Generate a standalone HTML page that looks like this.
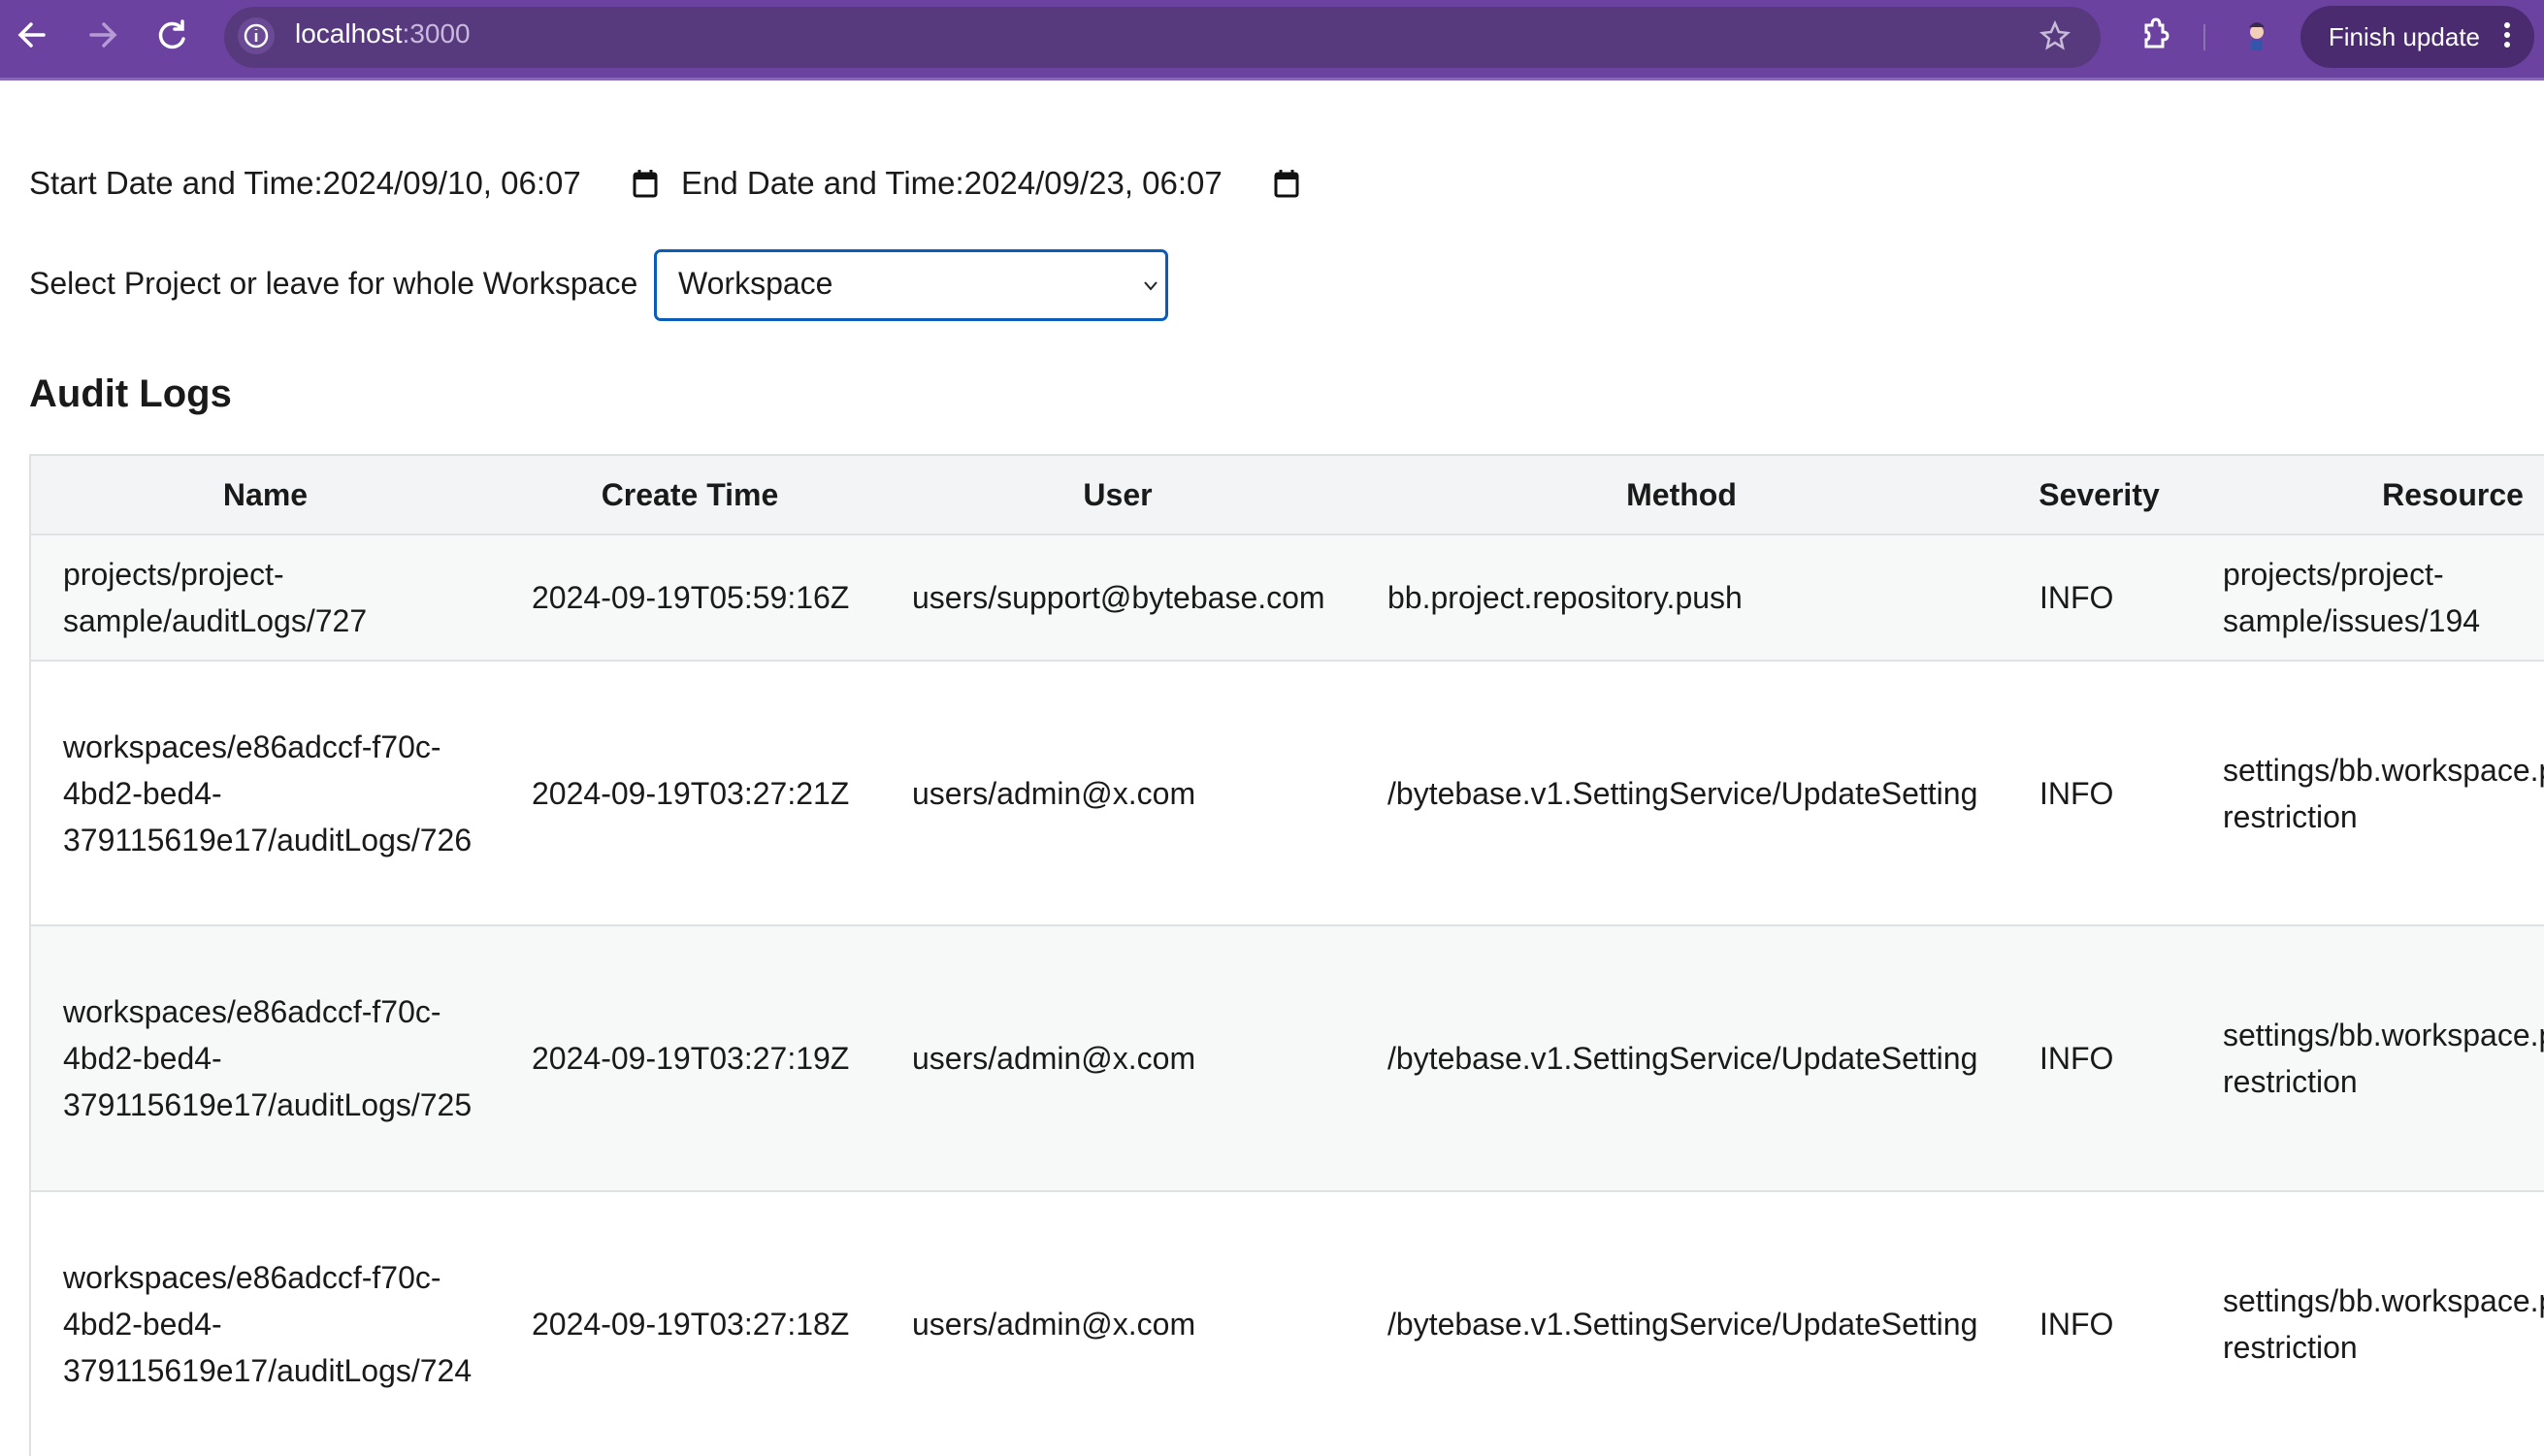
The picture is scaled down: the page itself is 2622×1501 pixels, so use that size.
<!DOCTYPE html>
<html><head><meta charset="utf-8"><style>
html,body{margin:0;padding:0;width:2622px;height:1442px;overflow:hidden;background:#fff;font-family:"Liberation Sans",Arial,sans-serif;color:#1a1a1a}
.bar{position:absolute;left:0;top:0;width:2622px;height:80px;background:#6c42a0;border-bottom:3px solid #8a68b8}
.pill{position:absolute;left:231px;top:7px;width:1934px;height:63px;border-radius:32px;background:#573a7e}
.url{position:absolute;left:304px;top:19px;font-size:28px;color:#fff}
.url span{color:#c9b9dc}
.fin{position:absolute;left:2371px;top:6px;width:241px;height:64px;border-radius:32px;background:#4a2b6f;color:#fff;font-size:26px;line-height:64px}
.lbl{position:absolute;font-size:33px;white-space:nowrap}
.sel{position:absolute;left:674px;top:257px;width:524px;height:68px;border:3px solid #0b5cb8;border-radius:7px;box-sizing:content-box}
h2{position:absolute;left:30px;top:384px;margin:0;font-size:40px;font-weight:bold}
table{position:absolute;left:30px;top:468px;border-collapse:collapse;table-layout:fixed;width:2767px;font-size:32px;line-height:48px}
th,td{padding:0 0 0 33px;vertical-align:middle;text-align:left;white-space:nowrap;border-top:2px solid #dfe2e4}
th{text-align:center;padding:0;font-weight:bold;height:80px;background:#f2f4f5}
table{border-left:2px solid #dfe2e4;border-top:2px solid #dfe2e4}
tr.g td{background:#f7f9f9}
</style></head><body>
<div class="bar">
<svg width="2622" height="80" style="position:absolute;left:0;top:0">
<g stroke="#fff" stroke-width="3.5" fill="none" stroke-linecap="round">
<path d="M45 36H22M32 25L21 36L32 47"/>
<path d="M94 36H117M107 25L118 36L107 47" stroke="#b59bd6"/>
<path d="M186 28A12 12 0 1 0 189 40M188 22V30H180"/>
</g>
<path d="M2272 25V52" stroke="#8c72b0" stroke-width="2"/>
<circle cx="2326" cy="33" r="7" fill="#f1cfb8"/>
<path d="M2318 28Q2326 18 2334 28" fill="#3b2a50"/>
<rect x="2320" y="41" width="12" height="11" fill="#3355aa"/>
</svg>
</div>
<div class="pill" style="z-index:1"></div>
<div class="url" style="z-index:2">localhost<span>:3000</span></div>
<div class="fin" style="z-index:1">&nbsp;&nbsp;&nbsp;&nbsp;Finish update</div>
<svg width="10" height="30" style="position:absolute;left:2579px;top:22px;z-index:2"><circle cx="5" cy="4" r="3" fill="#fff"/><circle cx="5" cy="14" r="3" fill="#fff"/><circle cx="5" cy="24" r="3" fill="#fff"/></svg>
<svg width="2622" height="80" style="position:absolute;left:0;top:0;z-index:2">
<circle cx="264" cy="37" r="19" fill="#6a4a95"/>
<circle cx="264" cy="37" r="11" stroke="#fff" stroke-width="2.5" fill="none"/>
<path d="M264 34V43M264 30V31" stroke="#fff" stroke-width="2.5"/>
<path d="M2118 24L2122 33L2131 34L2124 40L2126 49L2118 44L2110 49L2112 40L2105 34L2114 33Z" stroke="#c8bcd8" stroke-width="2.5" fill="none"/>
<path d="M2212 26H2218Q2218 20 2222 20Q2226 20 2226 26H2229V33Q2234 33 2234 37Q2234 41 2229 41V48H2212V41Q2215 41 2215 37Q2215 33 2212 33Z" stroke="#fff" stroke-width="3" fill="none"/>
</svg>

<div class="lbl" style="left:30px;top:170px">Start Date and Time:2024/09/10, 06:07</div>
<svg width="30" height="32" style="position:absolute;left:651px;top:174px"><rect x="3" y="5" width="22" height="23" rx="2" stroke="#111" stroke-width="3" fill="none"/><rect x="3" y="5" width="22" height="6" fill="#111"/><path d="M8 1V6M20 1V6" stroke="#111" stroke-width="3"/></svg>
<div class="lbl" style="left:702px;top:170px">End Date and Time:2024/09/23, 06:07</div>
<svg width="30" height="32" style="position:absolute;left:1312px;top:174px"><rect x="3" y="5" width="22" height="23" rx="2" stroke="#111" stroke-width="3" fill="none"/><rect x="3" y="5" width="22" height="6" fill="#111"/><path d="M8 1V6M20 1V6" stroke="#111" stroke-width="3"/></svg>

<div class="lbl" style="left:30px;top:274px;font-size:32px">Select Project or leave for whole Workspace</div>
<div class="sel"></div>
<div class="lbl" style="left:699px;top:274px;font-size:32px">Workspace</div>
<svg width="20" height="14" style="position:absolute;left:1177px;top:288px"><path d="M3 3L9 10L15 3" stroke="#222" stroke-width="2" fill="none"/></svg>

<h2>Audit Logs</h2>

<table>
<colgroup><col style="width:484px"><col style="width:392px"><col style="width:490px"><col style="width:672px"><col style="width:189px"><col style="width:540px"></colgroup>
<tr><th>Name</th><th>Create Time</th><th>User</th><th>Method</th><th>Severity</th><th>Resource</th></tr>
<tr class="g" style="height:130px"><td>projects/project-<br>sample/auditLogs/727</td><td>2024-09-19T05:59:16Z</td><td>users/support@bytebase.com</td><td>bb.project.repository.push</td><td>INFO</td><td>projects/project-<br>sample/issues/194</td></tr>
<tr style="height:273px"><td>workspaces/e86adccf-f70c-<br>4bd2-bed4-<br>379115619e17/auditLogs/726</td><td>2024-09-19T03:27:21Z</td><td>users/admin@x.com</td><td>/bytebase.v1.SettingService/UpdateSetting</td><td>INFO</td><td>settings/bb.workspace.profile-<br>restriction</td></tr>
<tr class="g" style="height:274px"><td>workspaces/e86adccf-f70c-<br>4bd2-bed4-<br>379115619e17/auditLogs/725</td><td>2024-09-19T03:27:19Z</td><td>users/admin@x.com</td><td>/bytebase.v1.SettingService/UpdateSetting</td><td>INFO</td><td>settings/bb.workspace.profile-<br>restriction</td></tr>
<tr style="height:273px"><td>workspaces/e86adccf-f70c-<br>4bd2-bed4-<br>379115619e17/auditLogs/724</td><td>2024-09-19T03:27:18Z</td><td>users/admin@x.com</td><td>/bytebase.v1.SettingService/UpdateSetting</td><td>INFO</td><td>settings/bb.workspace.profile-<br>restriction</td></tr>
</table>
</body></html>
